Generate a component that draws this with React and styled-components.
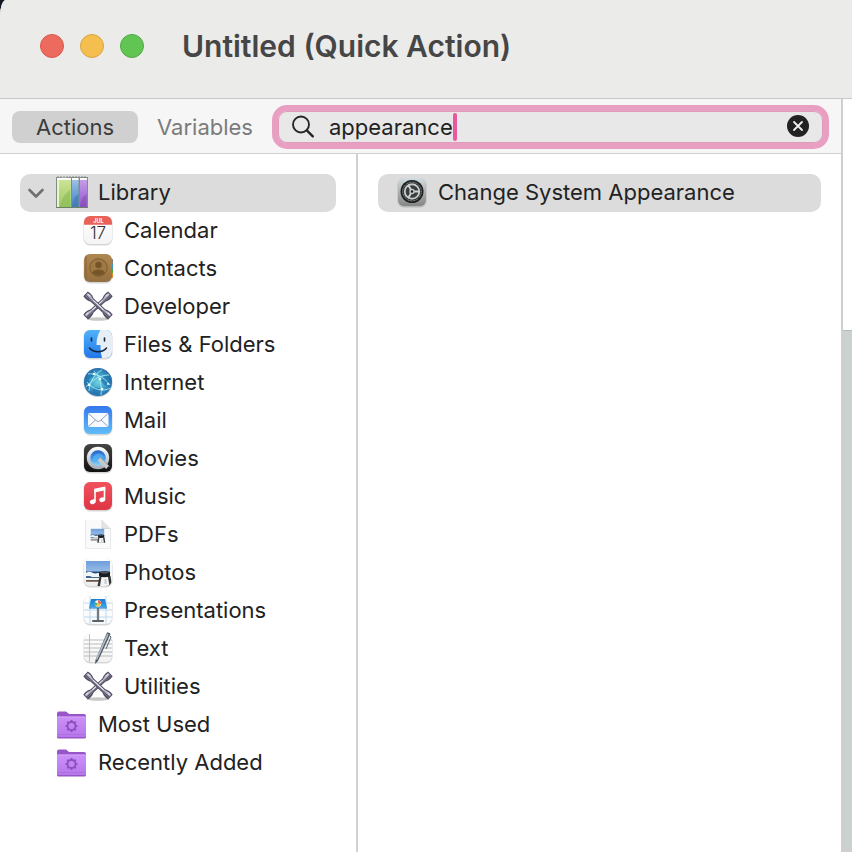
import React, { useState } from "react";
import styled, { createGlobalStyle } from "styled-components";

const GlobalStyle = createGlobalStyle`
  *, *::before, *::after { box-sizing: border-box; }
  body {
    margin: 0;
    background: #151a26;
    color: #222222;
    font-family: Inter, "Liberation Sans", sans-serif;
    font-size: 22px;
    line-height: 28px;
  }
  button, input { font: inherit; color: inherit; }
`;

const Window = styled.div`
  display: flex;
  flex-direction: column;
  min-height: 100vh;
  background: #ffffff;
  border-top-left-radius: 6px 16px;
  overflow: hidden;
`;

const TitleBar = styled.header`
  display: flex;
  align-items: center;
  height: 99px;
  padding: 0 40px 6px;
  background: #ebebe9;
  border-bottom: 1px solid #c9c9c8;
`;

const WindowControls = styled.div`
  display: flex;
  gap: 16px;
  margin-right: 38px;
`;

const ControlDot = styled.button`
  width: 24px;
  height: 24px;
  padding: 0;
  border: 1px solid ${(p) => p.$edge};
  border-radius: 50%;
  background: ${(p) => p.$fill};
`;

const Title = styled.h1`
  margin: 0;
  color: #464646;
  font-size: 30px;
  line-height: 36px;
  font-weight: 600;
  white-space: nowrap;
`;

const Body = styled.div`
  display: grid;
  flex: 1;
  grid-template-columns: minmax(0, 1fr) 11px;
`;

const Browser = styled.section`
  display: flex;
  flex-direction: column;
`;

const Toolbar = styled.div`
  display: flex;
  align-items: center;
  height: 55px;
  padding: 2px 12px 0;
  background: #f6f6f6;
  border-bottom: 1px solid #d0d0d0;
`;

const Tab = styled.button`
  height: 32px;
  padding: 0;
  width: ${(p) => (p.$active ? 126 : 134)}px;
  border: 0;
  border-radius: 8px;
  background: ${(p) => (p.$active ? "#d0d0d0" : "transparent")};
  color: ${(p) => (p.$active ? "#3c3c3c" : "#7b7b7b")};
`;

const SearchField = styled.label`
  display: flex;
  align-items: center;
  flex: 1;
  height: 44px;
  padding: 0 13px;
  border: 6px solid #e99fc1;
  border-radius: 15px;
  background: #e8e8e8;
  box-shadow: inset 0 0 0 1px #df9bba;
`;

const SearchInput = styled.input`
  field-sizing: content;
  min-width: 4px;
  height: 28px;
  margin-left: 14px;
  padding: 0;
  border: 0;
  outline: 0;
  background: transparent;
  caret-color: transparent;
`;

const Caret = styled.span`
  width: 4px;
  height: 28px;
  border-radius: 2px;
  background: #e9589d;
`;

const ClearButton = styled.button`
  display: flex;
  margin-left: auto;
  padding: 0;
  border: 0;
  background: transparent;
`;

const Panes = styled.div`
  display: grid;
  flex: 1;
  grid-template-columns: 358px minmax(0, 1fr);
`;

const Sidebar = styled.nav`
  padding: 20px;
  border-right: 2px solid #d1d1d1;
`;

const Results = styled.main`
  padding: 20px;
`;

const List = styled.ul`
  margin: 0;
  padding: 0;
  list-style: none;
`;

const indents = { group: 36, item: 62, result: 18, open: 0 };

const RowButton = styled.button`
  display: flex;
  align-items: center;
  width: 100%;
  height: 38px;
  padding: 0 0 2px ${(p) => indents[p.$kind]}px;
  border: 0;
  border-radius: 10px;
  background: ${(p) => (p.$selected ? "#dcdcdc" : "transparent")};
  text-align: left;
  white-space: nowrap;
`;

const RowIcon = styled.svg`
  flex: none;
  width: 32px;
  height: 32px;
  margin-right: 10px;
`;

const Chevron = styled.svg`
  width: 20px;
  height: 20px;
  margin: 0 10px 0 6px;
`;

const Preview = styled.aside`
  display: flex;
  flex-direction: column;
  border-left: 2px solid #cfcfcf;
`;

const PreviewTop = styled.div`
  height: 232px;
  border-bottom: 1px solid #b8bbbb;
`;

const PreviewCanvas = styled.div`
  flex: 1;
  background: #cbd1d0;
`;

function Gradient({ id, stops }) {
  return (
    <linearGradient id={id} x1="0" y1="0" x2="0" y2="1">
      {stops.map((c, i) => (
        <stop key={i} offset={i / (stops.length - 1)} stopColor={c} />
      ))}
    </linearGradient>
  );
}

function Tile({ id, stops, children }) {
  return (
    <>
      <defs>
        <Gradient id={`${id}-fill`} stops={stops} />
        <clipPath id={`${id}-clip`}><rect x="2" y="2" width="28" height="28" rx="6" /></clipPath>
      </defs>
      <rect x="1.5" y="2" width="29" height="29.5" rx="6.5" fill="#000" opacity=".16" />
      <rect x="2" y="2" width="28" height="28" rx="6" fill={`url(#${id}-fill)`} />
      <g clipPath={`url(#${id}-clip)`}>{children}</g>
    </>
  );
}

function LibraryArt() {
  return (
    <>
      <defs>
        <Gradient id="lib-g" stops={["#cfe59b", "#b6d77c", "#9cc966"]} />
        <Gradient id="lib-b" stops={["#a5c6ea", "#6fa2dc", "#4d84c2"]} />
        <Gradient id="lib-p" stops={["#c8a4e8", "#ae7bdc", "#935cc6"]} />
      </defs>
      <path d="M0 1h32v31H0z" fill="#7d8f80" />
      <path d="M1 2h14v29H1z" fill="url(#lib-g)" />
      <path d="M2 3v28" stroke="#eff3cc" strokeWidth="2" />
      <path d="M4 31c1-6 4-13 10-17v17z" fill="#8bbb58" opacity=".6" />
      <path d="M16 2h6.5v29H16z" fill="url(#lib-b)" />
      <path d="M16 31c.5-5 2-10 6.500-13v13z" fill="#3a70ae" opacity=".5" />
      <path d="M24 2h7v29h-7z" fill="url(#lib-p)" />
      <path d="M24 31c.5-5 2-10 6.500-13v13z" fill="#7c42ad" opacity=".45" />
      <path d="M1 4V2q7-1 14 0v2zM16 4V2h6.500v2zM24 4V2h7v2z" fill="#fafafa" />
      <path d="M1 1h30" stroke="#888" strokeDasharray="2 1" />
      <path d="M0 31.500h32" stroke="#6a8263" />
    </>
  );
}

function CalendarArt() {
  return (
    <Tile id="cal" stops={["#ffffff", "#f4f4f4"]}>
      <path d="M2 2h28v8.700H2z" fill="#e96257" />
      <text x="16.500" y="9" textAnchor="middle" fontSize="5.500" fontWeight="700" fill="#fff">JUL</text>
      <text x="16" y="24.500" textAnchor="middle" fontSize="17" fontWeight="300" fill="#333">17</text>
    </Tile>
  );
}

function ContactsArt() {
  return (
    <>
      <rect x="27" y="7" width="4" height="6" fill="#8a8a8a" />
      <rect x="27" y="12" width="4" height="5" fill="#3ea1e0" />
      <rect x="27" y="17" width="4" height="5" fill="#55b948" />
      <rect x="27" y="21" width="4" height="5" fill="#ee9b36" />
      <Tile id="con" stops={["#ad8650", "#a37c48", "#93703f"]}>
        <path d="M4 2v28" stroke="#866437" strokeWidth="1" />
        <circle cx="16.500" cy="15.500" r="8.700" fill="#9f7945" stroke="#795a30" strokeWidth="1" />
        <circle cx="16.500" cy="13" r="3.200" fill="#765628" />
        <path d="M10 20.500c2-4 11-4 13 0-3 4-10 4-13 0" fill="#765628" />
      </Tile>
    </>
  );
}

function Wrench({ angle }) {
  return (
    <g transform={`rotate(${angle} 16 15.500)`}>
      <path d="M-1 12.200q3-.7 6 0l3 1.100h16l3-1.100q3-.7 6 0v6.600q-3 .7-6 0l-3-1.100H8l-3 1.100q-3 .7-6 0z" fill="#504f62" />
      <path d="M0 13.300h4.500l3.500 1h16l3.500-1H32v2.400H0z" fill="#b9b7ca" />
      <path d="M1 14h3M28 14h3M9 14.900h14" stroke="#e8e7f0" strokeWidth="1" />
      <path d="M0 17h4l4-.8h16l4 .8h4" fill="none" stroke="#7c7a91" strokeWidth="1" />
    </g>
  );
}

function ToolsArt() {
  return (
    <>
      <ellipse cx="16" cy="29" rx="11" ry="1.800" fill="#000" opacity=".22" />
      <Wrench angle={-43} />
      <Wrench angle={43} />
    </>
  );
}

function FilesArt() {
  return (
    <Tile id="fin" stops={["#50b2fa", "#2377e8"]}>
      <path d="M18.500 2c-3 5-4 9-4 15h4c0 5 .500 9 1.500 13h10V2z" fill="#e7eff6" />
      <path d="M9.500 10v3M22.500 10v3" stroke="#17273b" strokeWidth="1.600" strokeLinecap="round" />
      <path d="M7.500 20c4 5 13 5 17 0" fill="none" stroke="#17273b" strokeWidth="1.500" strokeLinecap="round" />
    </Tile>
  );
}

function InternetArt() {
  return (
    <>
      <defs>
        <radialGradient id="net"><stop stopColor="#6fd3e2" /><stop offset=".6" stopColor="#3d9fc8" /><stop offset="1" stopColor="#2a6dab" /></radialGradient>
        <clipPath id="net-clip"><circle cx="16" cy="16" r="14" /></clipPath>
      </defs>
      <circle cx="16" cy="16.500" r="14.500" fill="#1a5c76" opacity=".3" />
      <circle cx="16" cy="16" r="14" fill="url(#net)" />
      <g clipPath="url(#net-clip)">
        <path d="M3 13c2-6 7-9 11-8l-2 5-5 3 1 6-3 4zM18 13l9-5 4 5-4 7-5-1zM12 21l9 2-5 7-6-3z" fill="#1f72ad" opacity=".65" />
        <g fill="none" stroke="#b8f3fa" strokeWidth=".8">
          <path d="M6 8c7-1 15 2 22 11M4 21C9 15 17 9 27 9M12 5c6 6 8 14 7 24M7 25C8 16 12 8 20 4M5 16c6 8 16 10 24 6" />
        </g>
        <g fill="#e8ffff"><circle cx="12" cy="8" r="1.300" /><circle cx="18" cy="13" r="1.300" /><circle cx="7" cy="19" r="1.300" /><circle cx="20" cy="23" r="1.300" /><circle cx="26" cy="18" r="1" /></g>
      </g>
    </>
  );
}

function MailArt() {
  return (
    <Tile id="mail" stops={["#3478ec", "#60bdf8"]}>
      <rect x="6" y="9" width="20.500" height="14" rx="2" fill="#f6faff" />
      <path d="m7 10 7.500 6.800q1.800 1.500 3.600 0L25.500 10M7 22l6.500-6M25.500 22 19 16" fill="none" stroke="#8495aa" strokeWidth=".9" />
    </Tile>
  );
}

function MoviesArt() {
  return (
    <>
      <defs><Gradient id="qt-b" stops={["#1f58c2", "#3f98ea", "#a2e4fb"]} /><Gradient id="qt-s" stops={["#fafafa", "#a9b0b6"]} /></defs>
      <Tile id="qt" stops={["#454545", "#111111"]}>
        <circle cx="16" cy="16" r="9.500" fill="url(#qt-b)" stroke="url(#qt-s)" strokeWidth="3.400" />
        <path d="M11 18c0-7 8-9 11-3l-3 3z" fill="#5eb7f2" opacity=".6" />
        <path d="m17 17 8.500 8.500" stroke="#c4c9cc" strokeWidth="4" />
        <path d="m19 16 8.500 8.500" stroke="#8f989f" strokeWidth=".8" />
      </Tile>
    </>
  );
}

function MusicArt() {
  return (
    <Tile id="mus" stops={["#f1525d", "#de3545"]}>
      <path d="M13 9.500v11.500M22.500 7.500V19" stroke="#fff" strokeWidth="1.600" />
      <path d="m12.200 8.800 11.100-2.300v3.800l-11.100 2.300z" fill="#fff" />
      <ellipse cx="10.800" cy="21.800" rx="3" ry="2.300" fill="#fff" transform="rotate(-20 10.800 21.800)" />
      <ellipse cx="20.300" cy="19.700" rx="3" ry="2.300" fill="#fff" transform="rotate(-20 20.300 19.700)" />
    </Tile>
  );
}

function PhotoScene() {
  return (
    <>
      <defs><Gradient id="photo-sky" stops={["#6f9edb", "#b9d7f0"]} /></defs>
      <path d="M4 5h24v20H4z" fill="url(#photo-sky)" />
      <path d="M4 15.500h24V18H4z" fill="#24497a" />
      <path d="M4 17q3-2 6-.5 3 1.500 6 .5l12 1v8H4z" fill="#f0f5f8" />
      <path d="M4 20h4l2 1h7v1H4z" fill="#45668c" />
      <path d="M4 24h14v1.800H4z" fill="#6d5547" />
      <path d="M17.500 20h11l1.500 10H15.500z" fill="#34363a" />
      <path d="m19.500 21-1.500 9h9.500L26 21z" fill="#f4f4f4" />
      <path d="M22.500 23h2v5h-2z" fill="#c9cacc" />
      <path d="M17 16.500q5.500-2.500 11 0v3.500q-5.500 2.500-11 0z" fill="#1b1d21" />
      <ellipse cx="22.500" cy="16.500" rx="4" ry="1" fill="#55585e" />
    </>
  );
}

function PdfArt() {
  return (
    <>
      <path d="M3 2h17l9 9v19.500H3z" fill="#777" opacity=".3" />
      <path d="M3.500 2H20l8.500 8.500V30h-25z" fill="#fafafa" />
      <path d="M20 2v8.500h8.500" fill="#e4e4e4" stroke="#d0d0d0" strokeWidth=".7" />
      <g transform="translate(6.500 8) scale(.56)"><PhotoScene /></g>
    </>
  );
}

function PhotosArt() {
  return <Tile id="photos" stops={["#ffffff", "#eeeeee"]}><PhotoScene /></Tile>;
}

function PresentationsArt() {
  return (
    <>
      <defs><Gradient id="key-board" stops={["#1c7cd0", "#36a5ee"]} /></defs>
      <Tile id="key" stops={["#ffffff", "#f7f9fa"]}>
        <path d="M8 2v28M24 2v28M2 9h28M2 16h28M2 23h28" stroke="#b5d8f0" strokeWidth=".9" />
        <path d="M16 14v13" stroke="#747c82" strokeWidth="2.300" />
        <path d="M11 27h10" stroke="#59636a" strokeWidth="2" strokeLinecap="round" />
        <path d="M9 5h14l2 8.500H7z" fill="url(#key-board)" />
        <path d="M7 13.500h18v1H7z" fill="#1474ba" />
        <circle cx="16" cy="9.500" r="3.200" fill="#fff" />
        <path d="M16 9.500V6.300a3.200 3.200 0 0 1 3 4z" fill="#ef6651" />
        <path d="m16 9.500 3 1a3.200 3.200 0 0 1-5 1.500z" fill="#f2c43f" />
        <path d="m16 9.500-2 2.500a3.200 3.200 0 0 1-1-4z" fill="#54b665" />
      </Tile>
    </>
  );
}

function TextArt() {
  return (
    <>
      <Tile id="txt" stops={["#ffffff", "#f2f2f2"]}>
        <path d="M2 8h28M2 12h28M2 16h28M2 20h28M2 24h28" stroke="#b4b4b4" strokeWidth=".9" />
        <path d="M7.500 2v28" stroke="#e9a5a5" strokeWidth=".9" />
      </Tile>
      <path d="M25 .5q2.500-.5 3.500 1.500L16 29l-3 3 .5-4z" fill="#4e5861" />
      <path d="M26 2 14.500 27.500" stroke="#aebbc6" strokeWidth="1.800" />
      <path d="m28 4 1 1-5 12" fill="none" stroke="#58636e" />
    </>
  );
}

function FolderArt() {
  return (
    <>
      <defs><Gradient id="folder-face" stops={["#cc91f8", "#b677ec"]} /></defs>
      <path d="M1 5.500q0-2 2-2h7l3 2.500h15q2 0 2 2V29q0 1.500-1.500 1.500h-26Q1 30.500 1 29z" fill="#9755c8" />
      <path d="M1 10q0-1.500 1.500-1.500h26Q30 8.500 30 10v18q0 1-1 1H2q-1 0-1-1z" fill="url(#folder-face)" />
      <path d="M1 9h29" stroke="#d7a9fa" strokeWidth=".8" />
      <path d="M1 26.500h29" stroke="#a968d5" strokeWidth=".6" />
      <circle cx="15.500" cy="18" r="4" fill="none" stroke="#8e50bf" strokeWidth="1.800" />
      {[0, 45, 90, 135, 180, 225, 270, 315].map((a) => (
        <path key={a} d="M15.500 12v2" transform={`rotate(${a} 15.500 18)`} stroke="#8e50bf" strokeWidth="2" />
      ))}
    </>
  );
}

function SettingsArt() {
  return (
    <Tile id="set" stops={["#d1dde2", "#adb0b0", "#858585"]}>
      <circle cx="16" cy="15.500" r="11.500" fill="#1f2121" />
      <circle cx="16" cy="15.500" r="9.300" fill="none" stroke="#a5a9a9" strokeWidth="1" strokeDasharray="1 .6" />
      <circle cx="16" cy="15.500" r="7.300" fill="#3a3d3d" stroke="#c6c9c9" strokeWidth="1.900" />
      <path d="M18 15.500h5.500M15 13.800l-2.800-4.800M15 17.200 12.200 22" stroke="#d0d3d3" strokeWidth="1.900" />
      <circle cx="16" cy="15.500" r="2" fill="#1d1f1f" stroke="#c6c9c9" strokeWidth="1.400" />
    </Tile>
  );
}

const categories = [
  ["Calendar", CalendarArt],
  ["Contacts", ContactsArt],
  ["Developer", ToolsArt],
  ["Files & Folders", FilesArt],
  ["Internet", InternetArt],
  ["Mail", MailArt],
  ["Movies", MoviesArt],
  ["Music", MusicArt],
  ["PDFs", PdfArt],
  ["Photos", PhotosArt],
  ["Presentations", PresentationsArt],
  ["Text", TextArt],
  ["Utilities", ToolsArt],
];

function Row({ label, art: Art, kind, selected, onClick }) {
  return (
    <RowButton type="button" $kind={kind} $selected={selected} onClick={onClick}>
      {kind === "open" && (
        <Chevron viewBox="0 0 20 20" aria-hidden="true">
          <path d="m3.500 8 6.500 6.500L16.500 8" fill="none" stroke="#707070" strokeWidth="2.600" strokeLinecap="round" strokeLinejoin="round" />
        </Chevron>
      )}
      <RowIcon viewBox="0 0 32 32" aria-hidden="true"><Art /></RowIcon>
      {label}
    </RowButton>
  );
}

export default function App() {
  const [query, setQuery] = useState("appearance");
  const [tab, setTab] = useState("Actions");
  const [selected, setSelected] = useState("Library");

  return (
    <>
      <GlobalStyle />
      <Window>
        <TitleBar>
          <WindowControls>
            <ControlDot aria-label="Close" $fill="#ed6a5e" $edge="#d9594e" />
            <ControlDot aria-label="Minimize" $fill="#f5bf4f" $edge="#d9a441" />
            <ControlDot aria-label="Zoom" $fill="#61c554" $edge="#51aa42" />
          </WindowControls>
          <Title>Untitled (Quick Action)</Title>
        </TitleBar>
        <Body>
          <Browser>
            <Toolbar>
              {["Actions", "Variables"].map((name) => (
                <Tab key={name} type="button" aria-pressed={tab === name} $active={tab === name} onClick={() => setTab(name)}>
                  {name}
                </Tab>
              ))}
              <SearchField>
                <svg width="24" height="24" viewBox="0 0 24 24" aria-hidden="true">
                  <circle cx="10" cy="9.500" r="8" fill="none" stroke="#252525" strokeWidth="1.900" />
                  <path d="m15.800 15.300 6 6" stroke="#252525" strokeWidth="2.400" strokeLinecap="round" />
                </svg>
                <SearchInput aria-label="Search actions" value={query} onChange={(e) => setQuery(e.target.value)} />
                <Caret />
                <ClearButton type="button" aria-label="Clear search" onClick={() => setQuery("")}>
                  <svg width="24" height="24" viewBox="0 0 24 24" aria-hidden="true">
                    <circle cx="12" cy="11" r="11" fill="#222" />
                    <path d="m8 7 8 8M16 7l-8 8" stroke="#f0f0f0" strokeWidth="1.800" strokeLinecap="round" />
                  </svg>
                </ClearButton>
              </SearchField>
            </Toolbar>
            <Panes>
              <Sidebar aria-label="Library">
                <List>
                  <li>
                    <Row label="Library" art={LibraryArt} kind="open" selected={selected === "Library"} onClick={() => setSelected("Library")} />
                    <List>
                      {categories.map(([label, art]) => (
                        <li key={label}>
                          <Row label={label} art={art} kind="item" selected={selected === label} onClick={() => setSelected(label)} />
                        </li>
                      ))}
                    </List>
                  </li>
                  {["Most Used", "Recently Added"].map((label) => (
                    <li key={label}>
                      <Row label={label} art={FolderArt} kind="group" selected={selected === label} onClick={() => setSelected(label)} />
                    </li>
                  ))}
                </List>
              </Sidebar>
              <Results>
                <List>
                  <li><Row label="Change System Appearance" art={SettingsArt} kind="result" selected /></li>
                </List>
              </Results>
            </Panes>
          </Browser>
          <Preview aria-label="Workflow">
            <PreviewTop />
            <PreviewCanvas />
          </Preview>
        </Body>
      </Window>
    </>
  );
}
